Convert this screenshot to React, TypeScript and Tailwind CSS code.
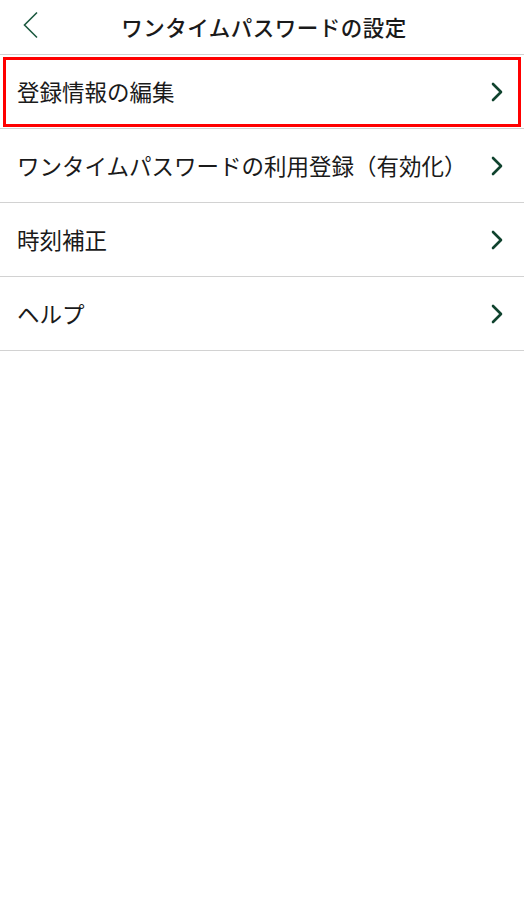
const items = [
  '登録情報の編集',
  'ワンタイムパスワードの利用登録（有効化）',
  '時刻補正',
  'ヘルプ',
];

function Chevron() {
  return (
    <svg width="14" height="20" viewBox="0 0 14 20" fill="none">
      <path d="M3 2 L11 10 L3 18" stroke="#10432e" strokeWidth="2.6" strokeLinecap="round" strokeLinejoin="round" />
    </svg>
  );
}

export default function App() {
  return (
    <div
      className="min-h-screen w-[524px] bg-white text-[#1a1a1a]"
      style={{ fontFamily: '"Noto Sans CJK JP", "Noto Sans", sans-serif' }}
    >
      <header className="relative flex h-[55px] items-center justify-center border-b border-[#d2d2d2]">
        <button className="absolute left-[20px] top-[11px] flex h-[28px] w-[20px] items-center justify-center">
          <svg width="18" height="28" viewBox="0 0 18 28" fill="none">
            <path d="M16 1.5 L3.5 14 L16 26.5" stroke="#1d5a40" strokeWidth="1.6" />
          </svg>
        </button>
        <h1 className="pl-[4px] text-[21.5px] font-medium leading-none tracking-[0.5px]">
          ワンタイムパスワードの設定
        </h1>
      </header>

      <ul className="relative">
        {items.map((label, i) => (
          <li
            key={label}
            className="relative flex h-[74px] items-center justify-between border-b border-[#d2d2d2] pl-[17px] pr-[20px]"
          >
            <span className="text-[22.5px] leading-none">{label}</span>
            <Chevron />
            {i === 0 && (
              <div className="pointer-events-none absolute left-[3px] right-[3px] top-[2px] bottom-[1px] border-[3px] border-[#ff0000]" />
            )}
          </li>
        ))}
      </ul>
    </div>
  );
}
